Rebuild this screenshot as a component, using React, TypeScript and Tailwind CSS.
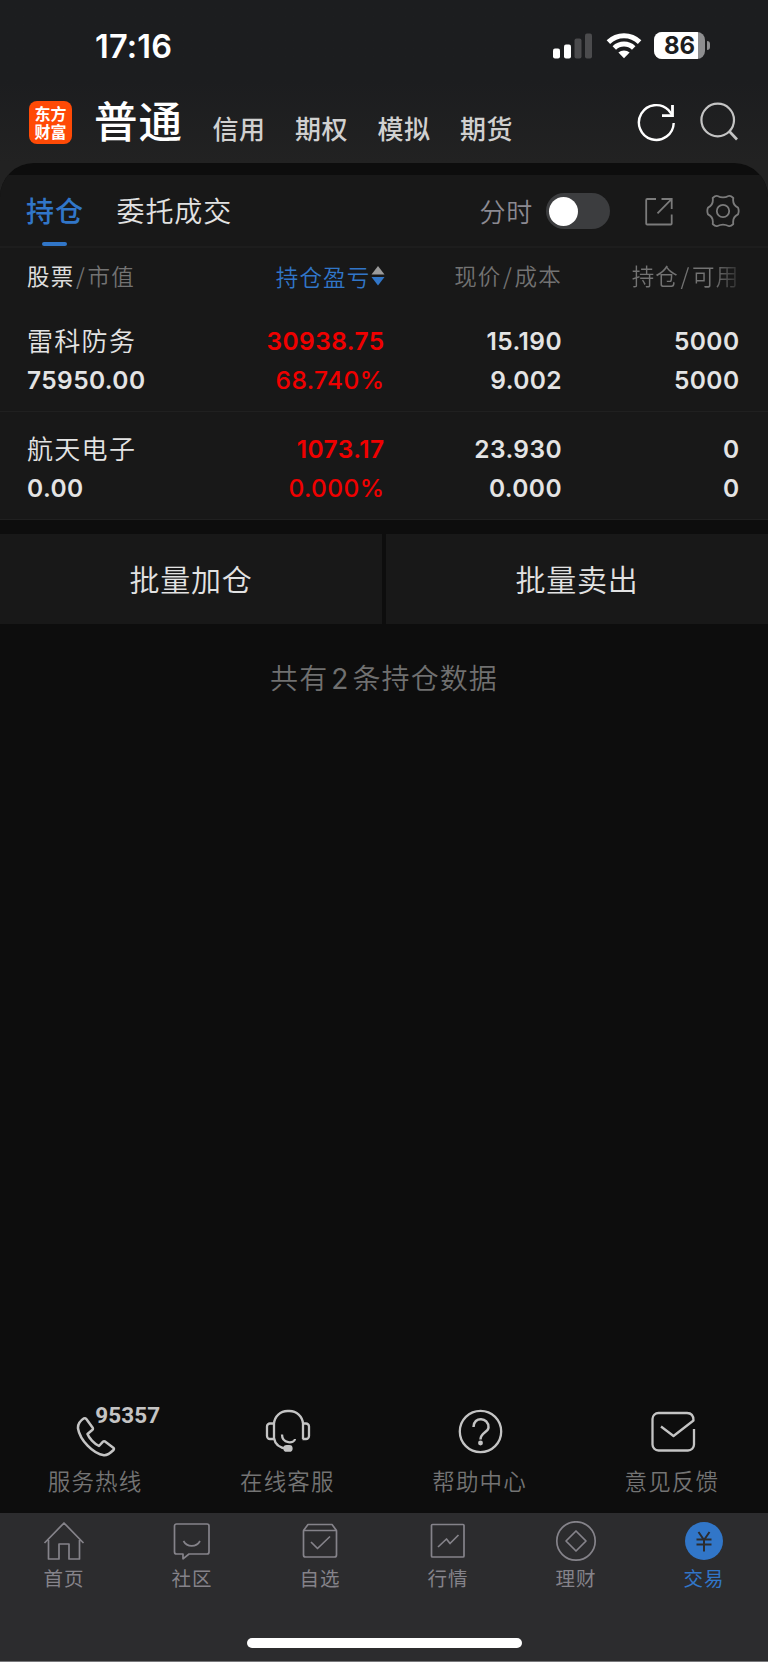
import type { ReactNode } from 'react'

const CJK = "font-['Noto_Sans_CJK_SC',sans-serif]"
const NUM = "font-['Inter','Noto_Sans_CJK_SC',sans-serif]"

function StatusBar() {
  return (
    <div className="flex h-[92px] items-center justify-between pr-[58px] pl-[95px]">
      <span className="pt-[2px] text-[32.500px] leading-[90px] font-semibold tracking-[0.2px] text-white font-['Inter',sans-serif]">
        17:16
      </span>
      <div className="flex items-center pb-[1px]">
        <svg width="40" height="26" viewBox="0 0 40 26" className="mr-[13px]">
          <rect x="0" y="15.5" width="7" height="10" rx="2" fill="#fff" />
          <rect x="11" y="11.5" width="7" height="14" rx="2" fill="#fff" />
          <rect x="21.5" y="5.5" width="7" height="20" rx="2" fill="#4b4b4d" />
          <rect x="32" y="0.5" width="7" height="25" rx="2" fill="#4b4b4d" />
        </svg>
        <svg width="36" height="26" viewBox="0 0 36 26" className="mr-[12px]">
          <g fill="none" stroke="#fff" strokeWidth="5">
            <path d="M2.4 9.1a22.4 22.4 0 0 1 31.2 0" />
            <path d="M8.3 15a14 14 0 0 1 19.4 0" />
          </g>
          <path d="M12.4 19.6a8.2 8.2 0 0 1 11.2 0L18 25.3z" fill="#fff" />
        </svg>
        <div className="flex h-[27px] w-[51px] overflow-hidden rounded-[8px] bg-[#8e8e90]">
          <div className="h-full w-[44px] bg-white pl-[10px] text-[24px] leading-[27px] font-bold text-[#1c1d1f] font-['Inter',sans-serif]">
            86
          </div>
        </div>
        <div className="ml-[2px] h-[9px] w-[3px] rounded-r-full bg-[#8e8e90]" />
      </div>
    </div>
  )
}

function TopNav() {
  return (
    <div className={`flex h-[71px] items-start pl-[29px] ${CJK}`}>
      <div className="mt-[9px] h-[43px] w-[43px] rounded-[8px] bg-[#ff4a06] px-[5.500px] pt-[3px] text-[16px] leading-[18px] font-bold break-all text-white">
        东方财富
      </div>
      <h1 className="ml-[22px] w-[118.500px] pt-[1px] text-[43.500px] leading-[54px] font-medium tracking-[1px] text-white">普通</h1>
      <nav className="mt-[16px] flex gap-[29.5px] text-[26px] leading-[40px] font-medium tracking-[0.5px] text-[#d0d0d0]">
        <span>信用</span>
        <span>期权</span>
        <span>模拟</span>
        <span>期货</span>
      </nav>
      <svg width="40" height="40" viewBox="0 0 40 40" className="mt-[10px] ml-[124px] shrink-0" fill="none" stroke="#fff" strokeWidth="2.4">
        <path d="M36.700 21A17.400 17.400 0 1 1 31.600 8.200L35 12.500" />
        <path d="M35.500 3v10.700H25" strokeWidth="2.800" />
      </svg>
      <svg width="40" height="40" viewBox="0 0 40 40" className="mt-[10px] ml-[22px] shrink-0" fill="none" stroke="#c4c4c4" strokeWidth="2.2">
        <circle cx="18.7" cy="18" r="16.3" />
        <path d="m30.5 29.5 7.5 8" strokeWidth="2.6" />
      </svg>
    </div>
  )
}

function TabRow() {
  return (
    <div className={`flex h-[73px] border-b-2 border-[#1d1d1d] pl-[26px] ${CJK}`}>
      <div className="flex w-[90.500px] flex-col">
        <span className="h-[67px] text-[28px] leading-[71px] font-medium tracking-[1px] text-[#3176c8]">持仓</span>
        <i className="ml-[16px] block h-[5px] w-[25px] rounded-[2px] bg-[#3176c8]" />
      </div>
      <span className="w-[363px] text-[28px] leading-[71px] font-[350] tracking-[0.9px] text-[#e2e2e2]">委托成交</span>
      <span className="w-[66.500px] text-[26px] leading-[71px] font-[350] tracking-[0.8px] text-[#8c8a92]">分时</span>
      <div className="mt-[18px] flex h-[36px] w-[64px] shrink-0 items-center rounded-full bg-[#3c3d3f] pl-[3px]">
        <div className="h-[29px] w-[29px] rounded-full bg-white" />
      </div>
      <svg width="30" height="30" viewBox="0 0 30 30" className="mt-[21px] ml-[34px] shrink-0" fill="none" stroke="#7b7b7b" strokeWidth="1.8">
        <path d="M12 3H3.2a1 1 0 0 0-1 1v23.500a1 1 0 0 0 1 1h23.500a1 1 0 0 0 1-1V18.500" />
        <path d="M17.500 3h10.200v10M27.300 3.400 13.500 17.300" />
      </svg>
      <svg width="34" height="34" viewBox="0 0 34 34" className="mt-[19px] ml-[32px] shrink-0" fill="none" stroke="#7b7b7b" strokeWidth="1.8" strokeLinejoin="round">
        <path d="M11.500 2Q17 4.800 22.500 2Q24.500 1.200 27.300 4Q26.200 11 32 13.600Q33.400 17 32 20.400Q26.200 23 27.300 30Q24.500 32.800 22.500 32Q17 29.200 11.500 32Q9.500 32.800 6.700 30Q7.800 23 2 20.400Q.6 17 2 13.600Q7.800 11 6.700 4Q9.500 1.200 11.500 2Z" />
        <circle cx="17" cy="17" r="6.200" />
      </svg>
    </div>
  )
}

const COLS = 'grid grid-cols-[160px_197.5px_177.5px_177.5px] pl-[27px]'

function TableHead() {
  return (
    <div className={`${COLS} h-[56px] text-[22.5px] leading-[54px] tracking-[1.2px] ${CJK} font-[350] text-[#737373]`}>
      <div className="whitespace-nowrap">
        <span className="font-normal text-[#dedede]">股票</span>
        <span className="px-[1.500px]">/</span>市值
      </div>
      <div className="flex items-center justify-end text-[#3176c8]">
        持仓盈亏
        <svg width="14" height="20" viewBox="0 0 13 20">
          <path d="M6.500 0 13 8.500H0z" fill="#9b9b9b" />
          <path d="M6.500 19.500 13 11H0z" fill="#3176c8" />
        </svg>
      </div>
      <div className="text-right">
        现价<span className="px-[1.500px]">/</span>成本
      </div>
      <div className="bg-gradient-to-r from-[#737373] from-85% to-[#2b2b2b] bg-clip-text text-right text-transparent">
        持仓<span className="px-[1.500px]">/</span>可用
      </div>
    </div>
  )
}

type Holding = { name: string; value: string; pl: string; pct: string; price: string; cost: string; held: string; usable: string }

const holdings: Holding[] = [
  { name: '雷科防务', value: '75950.00', pl: '30938.75', pct: '68.740%', price: '15.190', cost: '9.002', held: '5000', usable: '5000' },
  { name: '航天电子', value: '0.00', pl: '1073.17', pct: '0.000%', price: '23.930', cost: '0.000', held: '0', usable: '0' },
]

function HoldingRow({ h }: { h: Holding }) {
  return (
    <div className={`${COLS} h-[108px] border-b border-[#202020] pt-[18px] text-[24.500px] leading-[39px] font-semibold tracking-[0.4px] text-[#e4e4e4] ${NUM}`}>
      <div>
        <div className={`h-[39px] text-[26px] leading-[35px] font-[350] tracking-[1.3px] ${CJK}`}>{h.name}</div>
        <div>{h.value}</div>
      </div>
      <div className="text-right text-[#f00000]">
        <div>{h.pl}</div>
        <div className="font-medium">{h.pct}</div>
      </div>
      <div className="text-right">
        <div>{h.price}</div>
        <div>{h.cost}</div>
      </div>
      <div className="text-right">
        <div>{h.held}</div>
        <div>{h.usable}</div>
      </div>
    </div>
  )
}

const services: { label: string; icon: ReactNode }[] = [
  {
    label: '服务热线',
    icon: (
      <div className="ml-[46px] flex w-[84px] items-start">
        <svg width="40" height="42" viewBox="0 0 40 42" className="mt-[16px] shrink-0" fill="none" stroke="#c4c4c4" strokeWidth="2.500" strokeLinejoin="round">
          <path d="M8 2.300Q1.500 6.500 2 12.500C4 24 17 38 28 39.200q4 .2 9.500-5.200.9-1.300-.2-2.300L28.700 25.300q-.9-.4-1.700.4l-4 4.300C18 27.500 13 22 11.500 18l5-4.300q.7-.8.2-1.900L10.300 3q-1-1.200-2.300-.7z" />
        </svg>
        <span className="-ml-[21px] pt-[4px] text-[22.500px] leading-[22px] font-bold tracking-[0.1px] text-[#c4c4c4] font-['Roboto',sans-serif]">
          95357
        </span>
      </div>
    ),
  },
  {
    label: '在线客服',
    icon: (
      <svg width="46" height="46" viewBox="0 0 46 46" className="mt-[8px] ml-[2px]" fill="none" stroke="#c4c4c4" strokeWidth="2.300">
        <path d="M9 31V15.500A13.500 13.500 0 0 1 22.500 3h2A13.500 13.500 0 0 1 38 15.500V31M9 30c1 6.500 6 10 13 10.500" />
        <path d="M9 15.500H5a3 3 0 0 0-3 3V28a3 3 0 0 0 3 3h4M37.500 15.500H41a3 3 0 0 1 3 3V28a3 3 0 0 1-3 3h-3.500" />
        <path d="M17 26.500c0 9.500 12.500 9.500 13 4.500" />
        <rect x="19.500" y="38.200" width="7" height="4.400" rx="2.200" fill="#c4c4c4" />
      </svg>
    ),
  },
  {
    label: '帮助中心',
    icon: (
      <svg width="46" height="46" viewBox="0 0 46 46" className="mt-[8px] ml-[1px]" fill="none" stroke="#c4c4c4" strokeWidth="2.300">
        <circle cx="23.500" cy="23.500" r="20.700" />
        <path d="M16.500 19c0-11 15.200-10 15 .5-.2 5-8 5-8 12" strokeWidth="2.500" />
        <circle cx="23.500" cy="35" r="1.300" fill="#c4c4c4" />
      </svg>
    ),
  },
  {
    label: '意见反馈',
    icon: (
      <svg width="46" height="46" viewBox="0 0 46 46" className="mt-[8px] ml-[2px]" fill="none" stroke="#c4c4c4" strokeWidth="2.300" strokeLinejoin="round">
        <path d="M44 21v15.500a6 6 0 0 1-6 6H8.500a6 6 0 0 1-6-6V11a6 6 0 0 1 6-6H37q6.500 0 6.500 7.500L23.500 28 11 18.500" />
      </svg>
    ),
  },
]

const tabs: { label: string; active?: boolean; icon: ReactNode }[] = [
  {
    label: '首页',
    icon: <path d="M1.500 22 21 2l19.500 20M5.500 19v19H16V23h10v15h10.500V19" />,
  },
  {
    label: '社区',
    icon: (
      <>
        <path d="M5.500 3H36a2 2 0 0 1 2 2v26a2 2 0 0 1-2 2H18l-6 4.800V33H5.500a2 2 0 0 1-2-2V5a2 2 0 0 1 2-2z" />
        <path d="M12.500 20c3.500 6.500 13 6.500 16.500 0" />
      </>
    ),
  },
  {
    label: '自选',
    icon: (
      <>
        <path d="M4.500 9.500 9 3.500h24l4.500 6M4.500 9.500h33v24.500a2 2 0 0 1-2 2h-29a2 2 0 0 1-2-2z" />
        <path d="m12 21 6.500 6.500 12.500-12" />
      </>
    ),
  },
  {
    label: '行情',
    icon: (
      <>
        <rect x="4.500" y="3.500" width="32.500" height="32.500" rx="1" />
        <path d="m11 26 8.500-8 3.500 4.500 8.500-8.500" />
      </>
    ),
  },
  {
    label: '理财',
    icon: (
      <>
        <circle cx="21" cy="20" r="19.200" />
        <path d="M21 10 31 20 21 30 11 20z" />
      </>
    ),
  },
  {
    label: '交易',
    active: true,
    icon: (
      <>
        <circle cx="21" cy="20" r="19" fill="#3176c8" stroke="none" />
        <path d="m15.500 11 5.500 8 5.500-8M21 19v11.500M13.500 18.500h15M13.500 23.500h15" stroke="#2c2c2e" strokeWidth="2" />
      </>
    ),
  },
]

export default function App() {
  return (
    <div className="flex h-[1662px] w-[768px] flex-col overflow-hidden bg-[#0d0d0d]">
      <header className="h-[163px] shrink-0 bg-gradient-to-b from-[#1c1d1f] from-50% to-[#222222]">
        <StatusBar />
        <TopNav />
      </header>

      <div className="bg-[#222222]">
        <div className="overflow-hidden rounded-t-[34px] bg-[#0d0d0d] pt-[12px]">
          <section className="bg-[#181818]">
            <TabRow />
            <TableHead />
            {holdings.map((h) => (
              <HoldingRow key={h.name} h={h} />
            ))}
          </section>
        </div>
      </div>

      <div className={`mt-[14px] grid h-[90px] grid-cols-2 gap-[4px] text-center text-[30px] leading-[88px] font-[350] tracking-[0.8px] text-[#e2e2e2] ${CJK}`}>
        <div className="bg-[#181818]">批量加仓</div>
        <div className="bg-[#181818]">批量卖出</div>
      </div>

      <p className={`mt-[33px] text-center text-[28px] leading-[40px] font-[350] tracking-[1.100px] text-[#707070] ${CJK}`}>
        共有<span className="px-[3px] font-normal font-['Inter',sans-serif]">2</span>条持仓数据
      </p>

      <div className={`mt-auto -ml-px grid h-[113px] grid-cols-4 text-[22.500px] tracking-[1.200px] ${CJK}`}>
        {services.map((s) => (
          <div key={s.label} className="flex flex-col items-center">
            <div className="flex h-[62px] items-start">{s.icon}</div>
            <span className="leading-[36px] font-[350] text-[#747474]">{s.label}</span>
          </div>
        ))}
      </div>

      <footer className="flex h-[149px] shrink-0 flex-col border-b border-[#77777a] bg-[#2c2c2e]">
        <div className={`grid grid-cols-6 ${CJK}`}>
          {tabs.map((t) => (
            <div key={t.label} className={`flex flex-col items-center pt-[8px] ${t.active ? 'text-[#3176c8]' : 'text-[#85838a]'}`}>
              <svg width="42" height="42" viewBox="0 0 42 42" fill="none" stroke="currentColor" strokeWidth="1.700" strokeLinejoin="round">
                {t.icon}
              </svg>
              <span className="text-[19.500px] leading-[30px] tracking-[1px]">{t.label}</span>
            </div>
          ))}
        </div>
        <div className="mx-auto mt-auto mb-[13px] h-[10px] w-[275px] rounded-full bg-white" />
      </footer>
    </div>
  )
}
